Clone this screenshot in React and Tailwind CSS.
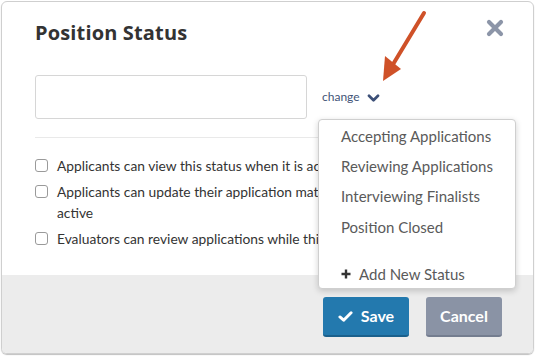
import React from 'react';

const options = [
  'Accepting Applications',
  'Reviewing Applications',
  'Interviewing Finalists',
  'Position Closed',
];

const rules = [
  'Applicants can view this status when it is active',
  'Applicants can update their application materials while this status is active',
  'Evaluators can review applications while this status is active',
];

const App = () => {
  return (
    <div className="relative w-[535px] h-[356px] bg-white p-px font-['Lato',sans-serif]">
      <div className="w-[533px] h-[353px] border border-[#cfcfcf] rounded-[6px] overflow-hidden flex flex-col shadow-[0_1px_1px_rgba(0,0,0,0.25)]">
        <div className="flex-1 px-[33px] pt-[17px] relative">
          <h1 className="text-[20px] leading-[28px] font-bold text-[#333] font-['Open_Sans',sans-serif] tracking-[0.15px]">Position Status</h1>
          <button className="absolute right-[29px] top-[17px] w-[18px] h-[18px]">
            <svg viewBox="0 0 18 18" className="w-[18px] h-[18px]">
              <path d="M3 3 L15 15 M15 3 L3 15" stroke="#8c95a8" strokeWidth="4.2" strokeLinecap="round" />
            </svg>
          </button>

          <div className="mt-[28px] flex items-center">
            <div className="w-[272px] h-[44px] border border-[#d6d6d6] rounded-[3px] bg-white" />
            <span className="ml-[15px] text-[12px] text-[#3f5477]">change</span>
            <svg viewBox="0 0 14 10" className="ml-[7px] mt-[2px] w-[13px] h-[9px]">
              <path d="M2 2 L7 7 L12 2" stroke="#3d5078" strokeWidth="3" fill="none" strokeLinecap="round" strokeLinejoin="round" />
            </svg>
          </div>

          <div className="mt-[18px] h-px bg-[#e9e9e9]" />

          <div className="mt-[17px] flex flex-col gap-[5px] w-[430px]">
            {rules.map((r) => (
              <label key={r} className="flex items-start gap-[9px] text-[13.8px] leading-[21px] text-[#333]">
                <span className="mt-[4px] shrink-0 w-[13px] h-[13px] border border-[#9a9a9a] rounded-[3px] bg-white" />
                <span>{r}</span>
              </label>
            ))}
          </div>
        </div>

        <div className="h-[78px] bg-[#ececec] flex justify-end items-start gap-[17px] pt-[22px] pr-[31px]">
          <button className="w-[86px] h-[40px] rounded-[3px] bg-[#2379ae] border-b-2 border-[#1a608c] text-white text-[16px] font-bold flex items-center justify-center gap-[8px]">
            <svg viewBox="0 0 16 14" className="w-[15px] h-[13px]">
              <path d="M2 7.5 L6 11 L14 3" stroke="#fff" strokeWidth="3.2" fill="none" strokeLinecap="round" strokeLinejoin="round" />
            </svg>
            Save
          </button>
          <button className="w-[76px] h-[40px] rounded-[3px] bg-[#8a93a5] border-b-2 border-[#747d8f] text-white text-[16px] font-bold">
            Cancel
          </button>
        </div>
      </div>

      <div className="absolute left-[318px] top-[119px] w-[198px] h-[170px] bg-white border border-[#cfcfcf] rounded-[4px] shadow-[0_2px_6px_rgba(0,0,0,0.18)] pt-[1px] px-[22px]">
        {options.map((o) => (
          <div key={o} className="h-[30.3px] flex items-center text-[15px] text-[#5a5a5a]">{o}</div>
        ))}
        <div className="mt-[17px] h-[30px] flex items-center gap-[8px] text-[15px] text-[#5a5a5a]">
          <svg viewBox="0 0 10 10" className="w-[10px] h-[10px]">
            <path d="M5 0.5 V9.5 M0.5 5 H9.5" stroke="#333" strokeWidth="2.4" />
          </svg>
          Add New Status
        </div>
      </div>

      <svg className="absolute left-[370px] top-[5px] w-[65px] h-[85px]" viewBox="370 5 65 85">
        <path d="M424 13 L392 66" stroke="#cf5128" strokeWidth="4" strokeLinecap="round" />
        <path d="M383 81 L385 56 L401 69 Z" fill="#cf5128" />
      </svg>
    </div>
  );
};

export default App;
